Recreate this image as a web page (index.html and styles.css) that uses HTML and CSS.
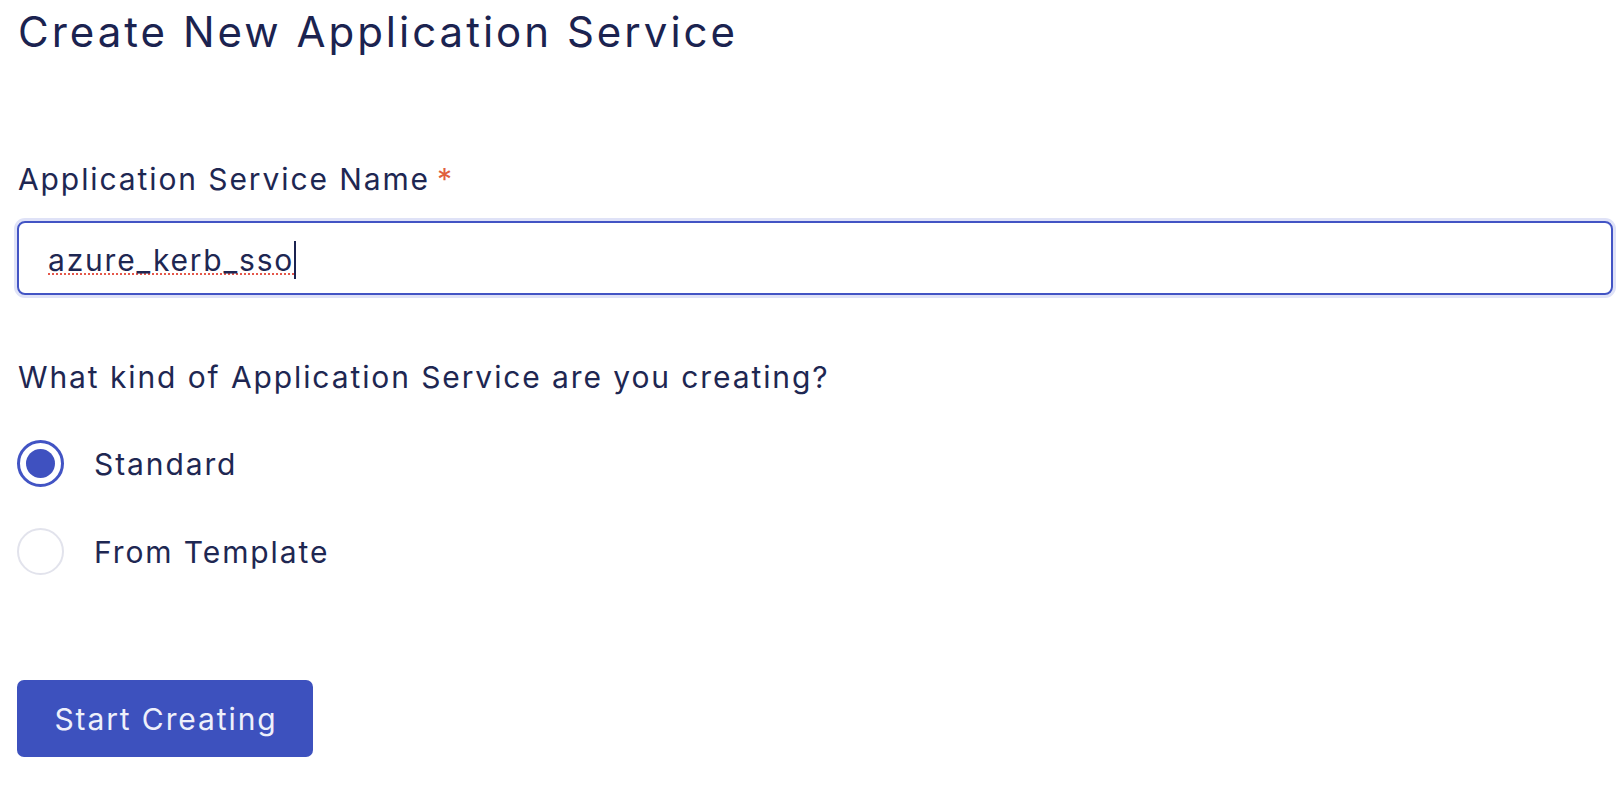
FILE: index.html
```html
<!DOCTYPE html>
<html>
<head>
<meta charset="utf-8">
<link rel="stylesheet" href="styles.css">
</head>
<body>
<main class="page">
  <h1 class="title">Create New Application Service</h1>
  <form class="form">
    <label class="label">Application Service Name<span class="req">*</span></label>
    <div class="input">
      <span class="misspelled">azure_kerb_sso</span><span class="caret"></span>
    </div>
    <p class="question">What kind of Application Service are you creating?</p>
    <div class="radios">
      <div class="radio-row">
        <span class="radio checked"><span class="dot"></span></span>
        <span class="radio-label">Standard</span>
      </div>
      <div class="radio-row">
        <span class="radio"></span>
        <span class="radio-label">From Template</span>
      </div>
    </div>
    <button type="button" class="btn">Start Creating</button>
  </form>
</main>
</body>
</html>
```

FILE: styles.css
```css
html, body {
  margin: 0;
  padding: 0;
  background: #ffffff;
}
body {
  font-family: Inter, "Noto Sans", sans-serif;
  color: #1e2752;
  letter-spacing: 1.9px;
}
.page {
  padding: 6px 0 0 17px;
  width: 1596px;
}
.title {
  margin: 0;
  font-size: 42px;
  line-height: 52px;
  font-weight: 400;
  letter-spacing: 3px;
  color: #1b2350;
  padding-left: 1px;
}
.form {
  display: flex;
  flex-direction: column;
  align-items: flex-start;
}
.label {
  margin-top: 103px;
  font-size: 30px;
  line-height: 36px;
  padding-left: 1px;
}
.req {
  color: #e0603e;
  margin-left: 7px;
}
.input {
  margin-top: 24px;
  box-sizing: border-box;
  width: 1596px;
  height: 74px;
  border: 2px solid #4254c4;
  border-radius: 8px;
  box-shadow: 0 0 0 3px #dfe2f7;
  display: flex;
  align-items: center;
  padding: 3px 0 0 29px;
  font-size: 30px;
  letter-spacing: 1.8px;
  color: #1e2752;
}
.misspelled {
  text-decoration: underline dotted #e5574a;
  text-decoration-thickness: 2px;
  text-underline-offset: 3px;
}
.caret {
  display: inline-block;
  width: 2px;
  height: 38px;
  background: #1b2350;
  margin-left: 0;
}
.question {
  margin: 64px 0 0 0;
  font-size: 30px;
  line-height: 36px;
  padding-left: 1px;
}
.radios {
  margin-top: 45px;
  display: flex;
  flex-direction: column;
  gap: 41px;
}
.radio-row {
  display: flex;
  align-items: center;
  gap: 30px;
  height: 47px;
}
.radio {
  box-sizing: border-box;
  width: 47px;
  height: 47px;
  border-radius: 50%;
  border: 2px solid #e2e3ec;
  background: #fff;
  display: flex;
  align-items: center;
  justify-content: center;
}
.radio.checked {
  border: 3px solid #4254c4;
}
.dot {
  width: 29px;
  height: 29px;
  border-radius: 50%;
  background: #3f51c0;
}
.radio-label {
  font-size: 30px;
  line-height: 36px;
}
.btn {
  margin-top: 105px;
  width: 296px;
  height: 77px;
  border: none;
  border-radius: 7px;
  background: #3d51be;
  color: #eef0fb;
  font-family: Inter, "Noto Sans", sans-serif;
  font-size: 30px;
  letter-spacing: 1.9px;
  padding: 0 0 0 2px;
}
```
